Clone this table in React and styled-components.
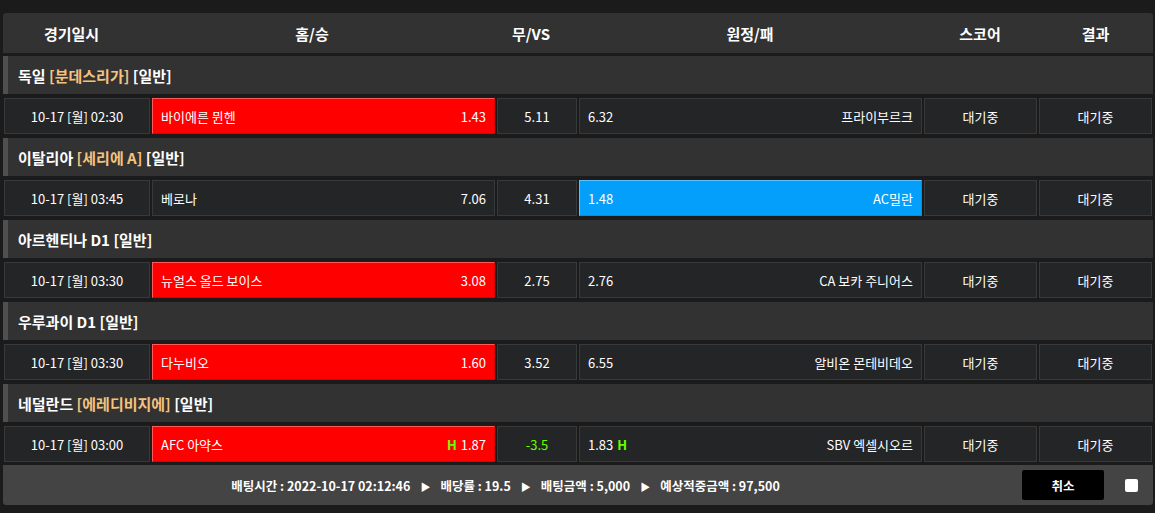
import React from 'react';
import styled, { createGlobalStyle, css } from 'styled-components';

const GlobalStyle = createGlobalStyle`
  body {
    margin: 0;
    background: #1b1b1b;
    font-family: "Noto Sans CJK KR", "Noto Sans", sans-serif;
    color: #fff;
  }
`;

const Board = styled.div`
  padding: 13px 2px 8px 3px;
  display: flex;
  flex-direction: column;
`;

const HeadRow = styled.div`
  display: grid;
  grid-template-columns: 137px 344px 94px 344px 116px 115px;
  height: 40px;
  background: #323232;
  border-radius: 3px 3px 0 0;
`;

const HeadCell = styled.div`
  display: flex;
  align-items: center;
  justify-content: center;
  font-size: 15px;
  font-weight: bold;
  color: #fff;
`;

const League = styled.div`
  display: flex;
  align-items: center;
  height: 38px;
  margin-top: ${({first}) => first ? '3px' : '4px'};
  background: #323232;
  border-left: 5px solid #505050;
  padding-left: 10px;
  font-size: 15px;
  font-weight: bold;
  white-space: pre;
`;

const Tag = styled.span`
  color: #f6c27c;
`;

const Row = styled.div`
  display: grid;
  grid-template-columns: 146px 343px 80px 343px 113px 113px;
  gap: 2px;
  height: 36px;
  margin-top: 4px;
  padding-left: 1px;
`;

const Cell = styled.div`
  display: flex;
  align-items: center;
  justify-content: ${({align}) => align || 'center'};
  padding: 0 8px;
  box-sizing: border-box;
  background: #242527;
  border: 1px solid #37393b;
  font-size: 13px;
  color: #fff;
  white-space: pre;
  ${({pick}) => pick === 'red' && css`
    background: #ff0000;
    border-color: #ff5a5a #e00000 #e00000 #ff5a5a;
  `}
  ${({pick}) => pick === 'blue' && css`
    background: #049ffa;
    border-color: #5cc2ff #0390e0 #0390e0 #5cc2ff;
  `}
`;

const Odds = styled.span`
  display: flex;
  align-items: center;
  gap: 4px;
`;

const Green = styled.span`
  color: #66ff00;
  font-weight: ${({bold}) => bold ? 'bold' : 'normal'};
`;

const Footer = styled.div`
  display: flex;
  align-items: center;
  height: 40px;
  margin-top: 3px;
  background: #444;
  border-radius: 0 0 3px 3px;
  padding-right: 15px;
`;

const Summary = styled.div`
  flex: 1;
  padding-right: 14px;
  text-align: center;
  font-size: 12.5px;
  font-weight: bold;
  white-space: pre;
`;

const Arrow = styled.span`
  font-size: 10px;
  margin: 0 10px;
`;

const CancelButton = styled.button`
  width: 82px;
  height: 30px;
  margin-right: 21px;
  background: #000;
  border: none;
  border-radius: 2px;
  color: #fff;
  font-family: inherit;
  font-size: 12.5px;
  font-weight: bold;
`;

const Check = styled.span`
  width: 13px;
  height: 13px;
  background: #fff;
  border-radius: 2px;
`;

const games = [
  {
    country: '독일', tag: '[분데스리가]', time: '10-17 [월] 02:30',
    home: '바이에른 뮌헨', homeOdds: '1.43', draw: '5.11', awayOdds: '6.32', away: '프라이부르크', pick: 'home',
  },
  {
    country: '이탈리아', tag: '[세리에 A]', time: '10-17 [월] 03:45',
    home: '베로나', homeOdds: '7.06', draw: '4.31', awayOdds: '1.48', away: 'AC밀란', pick: 'away',
  },
  {
    country: '아르헨티나 D1', tag: '', time: '10-17 [월] 03:30',
    home: '뉴얼스 올드 보이스', homeOdds: '3.08', draw: '2.75', awayOdds: '2.76', away: 'CA 보카 주니어스', pick: 'home',
  },
  {
    country: '우루과이 D1', tag: '', time: '10-17 [월] 03:30',
    home: '다누비오', homeOdds: '1.60', draw: '3.52', awayOdds: '6.55', away: '알비온 몬테비데오', pick: 'home',
  },
  {
    country: '네덜란드', tag: '[에레디비지에]', time: '10-17 [월] 03:00',
    home: 'AFC 아약스', homeOdds: '1.87', draw: '-3.5', awayOdds: '1.83', away: 'SBV 엑셀시오르', pick: 'home', handicap: true,
  },
];

const App = () => {
  return (
    <>
      <GlobalStyle />
      <Board>
        <HeadRow>
          <HeadCell>경기일시</HeadCell>
          <HeadCell>홈/승</HeadCell>
          <HeadCell>무/VS</HeadCell>
          <HeadCell>원정/패</HeadCell>
          <HeadCell>스코어</HeadCell>
          <HeadCell>결과</HeadCell>
        </HeadRow>
        {games.map((g, i) => (
          <React.Fragment key={i}>
            <League first={i === 0}>
              {g.country + ' '}
              {g.tag && <Tag>{g.tag + ' '}</Tag>}
              [일반]
            </League>
            <Row>
              <Cell>{g.time}</Cell>
              <Cell align="space-between" pick={g.pick === 'home' ? 'red' : undefined}>
                <span>{g.home}</span>
                <Odds>{g.handicap && <Green bold>H</Green>}{g.homeOdds}</Odds>
              </Cell>
              <Cell>{g.handicap ? <Green>{g.draw}</Green> : g.draw}</Cell>
              <Cell align="space-between" pick={g.pick === 'away' ? 'blue' : undefined}>
                <Odds>{g.awayOdds}{g.handicap && <Green bold>H</Green>}</Odds>
                <span>{g.away}</span>
              </Cell>
              <Cell>대기중</Cell>
              <Cell>대기중</Cell>
            </Row>
          </React.Fragment>
        ))}
        <Footer>
          <Summary>
            배팅시간 : 2022-10-17 02:12:46<Arrow>▶</Arrow>배당률 : 19.5<Arrow>▶</Arrow>배팅금액 : 5,000<Arrow>▶</Arrow>예상적중금액 : 97,500
          </Summary>
          <CancelButton>취소</CancelButton>
          <Check />
        </Footer>
      </Board>
    </>
  );
};

export default App;
